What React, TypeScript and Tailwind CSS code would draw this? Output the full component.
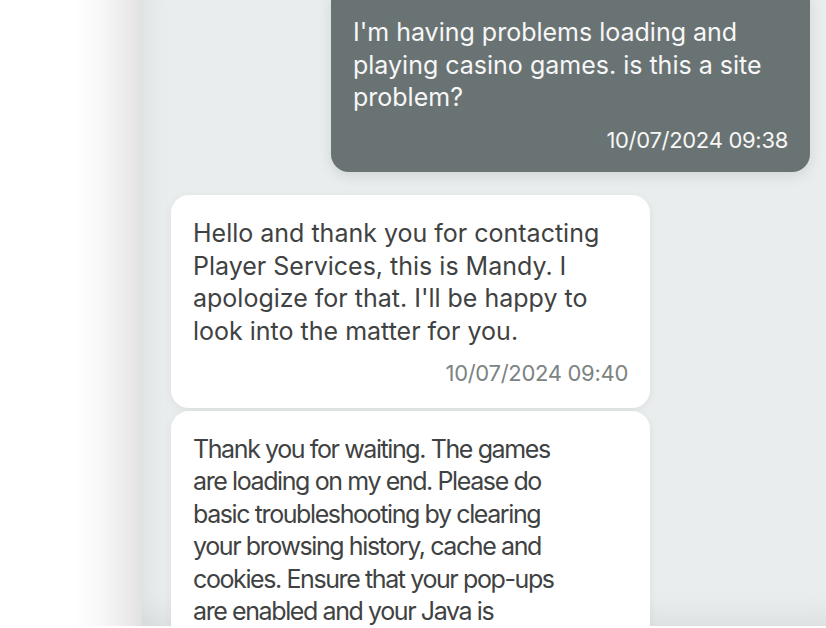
import React from 'react';

interface Msg {
  lines: string[];
  time?: string;
  out?: boolean;
  narrow?: boolean;
}

const messages: Msg[] = [
  {
    out: true,
    lines: ["I'm having problems loading and", 'playing casino games. is this a site', 'problem?'],
    time: '10/07/2024 09:38',
  },
  {
    lines: [
      'Hello and thank you for contacting',
      'Player Services, this is Mandy. I',
      "apologize for that. I'll be happy to",
      'look into the matter for you.',
    ],
    time: '10/07/2024 09:40',
  },
  {
    narrow: true,
    lines: [
      'Thank you for waiting. The games',
      'are loading on my end. Please do',
      'basic troubleshooting by clearing',
      'your browsing history, cache and',
      'cookies. Ensure that your pop-ups',
      'are enabled and your Java is',
    ],
  },
];

function Bubble({ msg }: { msg: Msg }) {
  if (msg.out) {
    return (
      <div className="ml-auto mr-4 mt-[-6px] w-[479px] rounded-b-[18px] bg-[#6a7373] px-[22px] pt-[22px] pb-4 text-[#f7f7f7] shadow-[0_4px_14px_rgba(0,0,0,0.10)]">
        {msg.lines.map((l) => (
          <div key={l} className="whitespace-nowrap">{l}</div>
        ))}
        <div className="mt-[10px] text-right text-[22px] tracking-[-0.3px]">{msg.time}</div>
      </div>
    );
  }
  return (
    <div className="ml-[29px] w-[479px] rounded-[18px] bg-white px-[22px] pt-[22px] pb-[18px] text-[#3f4242] shadow-[0_2px_10px_rgba(0,0,0,0.06)]">
      {msg.lines.map((l) => (
        <div key={l} className={msg.narrow ? 'whitespace-nowrap tracking-[-1.4px]' : 'whitespace-nowrap'}>{l}</div>
      ))}
      {msg.time && <div className="mt-[10px] text-right text-[22px] tracking-[-0.3px] text-[#7c8383]">{msg.time}</div>}
    </div>
  );
}

export default function App() {
  return (
    <div className="flex h-[628px] w-[826px] flex-col overflow-hidden bg-white font-['Inter',sans-serif] text-[25px] leading-[32.5px]">
      <div className="flex h-[626px]">
        <div className="w-[142px] shrink-0 bg-[linear-gradient(to_right,#ffffff_75px,#f6f6f6_105px,#e6e6e6_135px,#e0e1e1_142px)]" />
        <div className="relative flex-1 overflow-hidden bg-[#e9edee] shadow-[inset_0_-30px_30px_-20px_rgba(0,0,0,0.06),inset_30px_0_30px_-25px_rgba(0,0,0,0.05)]">
          <div className="flex flex-col">
            <Bubble msg={messages[0]} />
            <div className="h-[23px]" />
            <Bubble msg={messages[1]} />
            <div className="h-[3px]" />
            <Bubble msg={messages[2]} />
          </div>
        </div>
      </div>
    </div>
  );
}
